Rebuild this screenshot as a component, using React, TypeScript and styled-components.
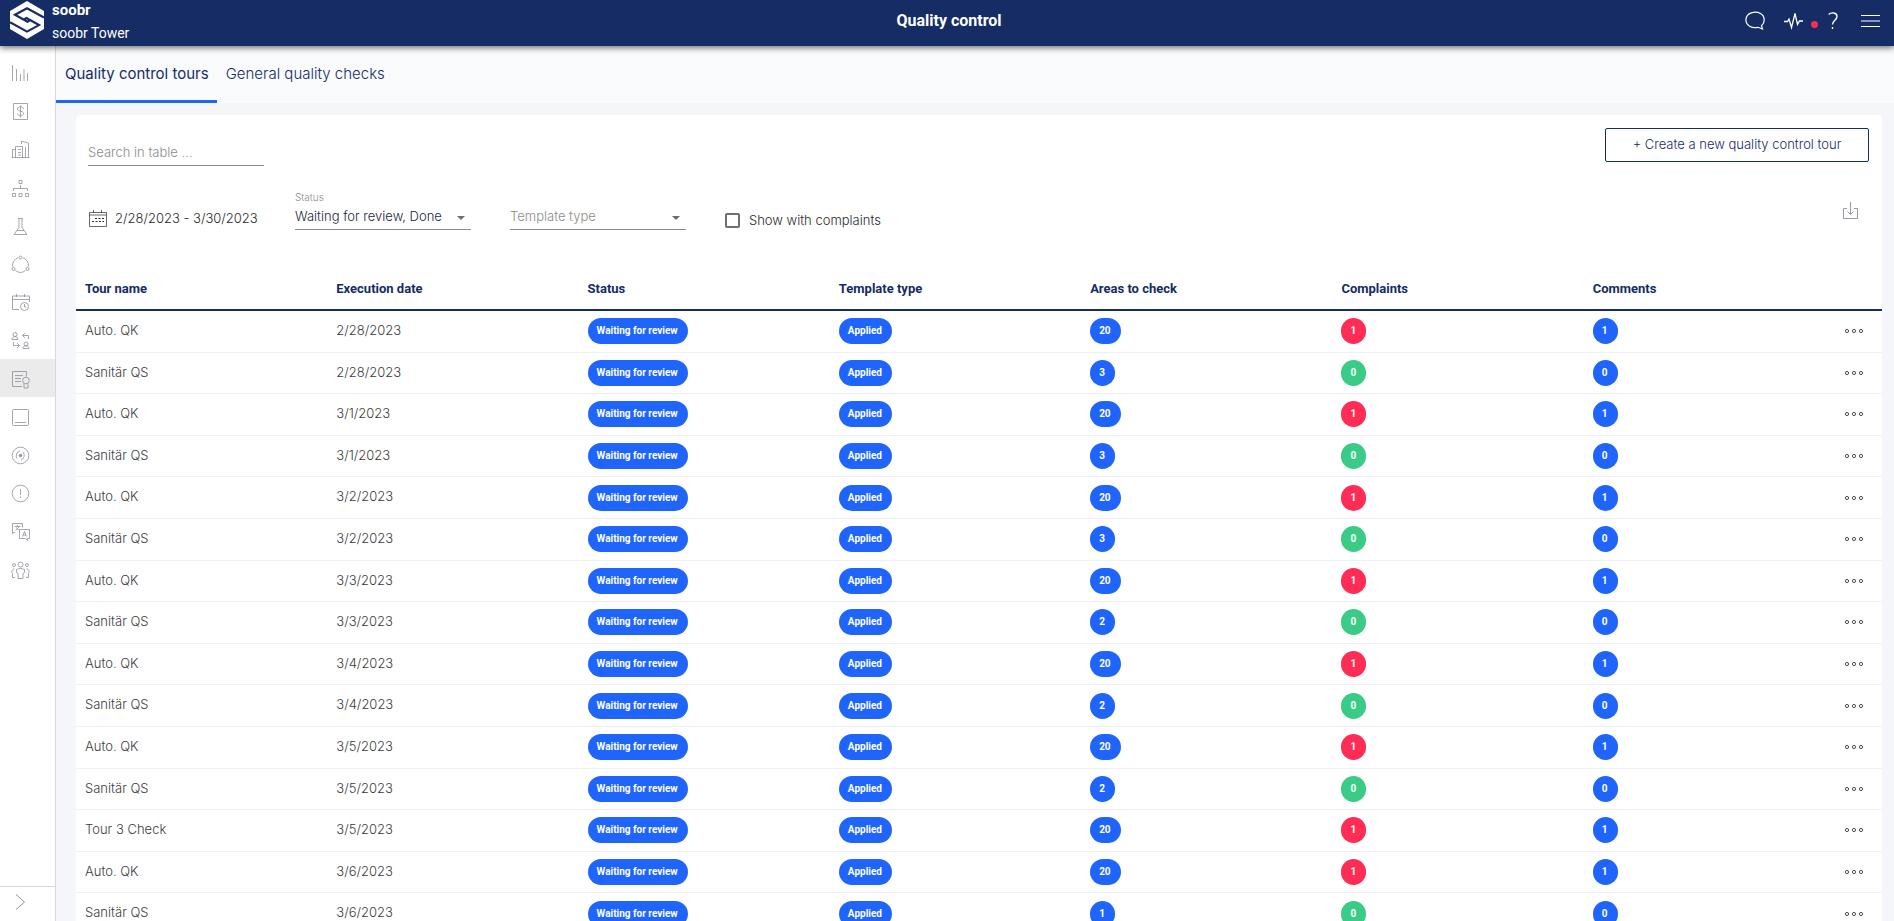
import React from "react";
import styled, { createGlobalStyle } from "styled-components";

const navy = "#152c64";
const blue = "#2065fb";

const GlobalStyle = createGlobalStyle`
  *, *::before, *::after { box-sizing: border-box; }
  html, body, #root { height: 100%; }
  body {
    margin: 0;
    overflow: hidden;
    background: #f5f6f9;
    color: #3c3c3c;
    font-family: Inter, "Noto Sans", sans-serif;
    font-size: 13px;
    font-weight: 300;
  }
  button, input, select { font: inherit; color: inherit; }
  svg { display: block; fill: none; stroke: currentColor; }
`;

const Page = styled.div`
  display: flex;
  flex-direction: column;
  height: 100vh;
`;

const Header = styled.header`
  display: grid;
  grid-template-columns: 1fr auto 1fr;
  flex: none;
  height: 46px;
  padding: 0 6px 0 10px;
  background: ${navy};
  color: #fff;
  font-family: Roboto, sans-serif;
  box-shadow: 0 2px 6px rgba(0, 0, 0, 0.55);
  z-index: 2;
`;

const Brand = styled.div`
  display: flex;
  align-items: flex-start;
  gap: 8px;
`;

const BrandText = styled.div`
  display: flex;
  flex-direction: column;
  gap: 7px;
  padding-top: 2px;
  font-size: 14px;
  font-weight: 400;
  line-height: 16px;
`;

const BrandName = styled.span`
  font-size: 15px;
  font-weight: 700;
`;

const Title = styled.h1`
  margin: 0;
  padding-top: 11px;
  font-size: 16px;
  font-weight: 700;
  line-height: 20px;
`;

const Tools = styled.div`
  display: flex;
  justify-content: flex-end;
  align-items: center;
  padding: 0 8px 4px 0;
`;

const IconButton = styled.button<{ $gap?: number }>`
  display: flex;
  align-items: center;
  margin: 0 0 0 ${(p) => p.$gap ?? 0}px;
  padding: 0;
  border: 0;
  background: none;
  cursor: pointer;
`;

const Dot = styled.span`
  width: 7px;
  height: 7px;
  margin: 6px 0 0 8px;
  border-radius: 50%;
  background: #ff2b54;
`;

const Body = styled.div`
  display: flex;
  flex: 1;
  min-height: 0;
`;

const Sidebar = styled.nav`
  display: flex;
  flex-direction: column;
  flex: none;
  width: 56px;
  padding-top: 7px;
  border-right: 1px solid #d9d9d9;
  background: #fff;
  color: #8f9199;
`;

const NavLink = styled.a<{ $active?: boolean }>`
  display: flex;
  align-items: center;
  box-sizing: content-box;
  height: 1.2em;
  padding: 11px 0 8px 11px;
  background: ${(p) => (p.$active ? "#ebebeb" : "transparent")};
  color: inherit;
  font-size: 16px;
`;

const Expand = styled.button`
  display: flex;
  align-items: center;
  height: 35px;
  margin-top: auto;
  padding: 0 0 4px 15px;
  border: 0;
  border-top: 1px solid #d9d9d9;
  background: none;
`;

const Main = styled.main`
  flex: 1;
  min-width: 0;
  overflow: hidden;
`;

const Tabs = styled.div`
  display: flex;
  height: 57px;
  background: #fafbfd;
`;

const Tab = styled.button<{ $active?: boolean }>`
  padding: 0 8px 0 9px;
  border: 0;
  border-bottom: 3px solid ${(p) => (p.$active ? blue : "transparent")};
  background: none;
  color: ${navy};
  font-size: 15px;
  font-weight: ${(p) => (p.$active ? 400 : 300)};
`;

const Card = styled.section`
  margin: 12px 12px 0 20px;
  border-radius: 4px 4px 0 0;
  background: #fff;
`;

const TopRow = styled.div`
  display: flex;
  justify-content: space-between;
  align-items: flex-start;
  height: 51px;
  padding: 13px 13px 0 12px;
`;

const Search = styled.input`
  width: 176px;
  height: 38px;
  padding: 10px 0 0;
  border: 0;
  border-bottom: 1px solid #8c8c8c;
  background: none;
  outline: none;
  &::placeholder { color: #8b8b8b; opacity: 1; }
`;

const CreateButton = styled.button`
  width: 264px;
  height: 34px;
  padding: 0 0 2px;
  border: 1px solid ${navy};
  border-radius: 2px;
  background: #fff;
  color: ${navy};
  white-space: pre;
`;

const Filters = styled.div`
  display: flex;
  align-items: flex-end;
  height: 64px;
  padding: 0 24px 0 13px;
`;

const DateRange = styled.button`
  display: flex;
  align-items: center;
  gap: 8px;
  width: 206px;
  height: 24px;
  padding: 0;
  border: 0;
  background: none;
  color: #2a2a2a;
`;

const Field = styled.label`
  display: flex;
  flex-direction: column;
  position: relative;
  width: 176px;
  margin-right: 39px;
`;

const FieldLabel = styled.span`
  color: #8b8b8b;
  font-size: 10px;
  line-height: 12px;
`;

const Select = styled.select<{ $empty?: boolean }>`
  width: 100%;
  height: 27px;
  padding: 0;
  border: 0;
  border-bottom: 1px solid #8c8c8c;
  border-radius: 0;
  appearance: none;
  background: none;
  color: ${(p) => (p.$empty ? "#8b8b8b" : "#1c2540")};
`;

const Caret = styled.span`
  position: absolute;
  right: 6px;
  bottom: 10px;
  border: 4px solid transparent;
  border-top-color: #6d6d6d;
  border-bottom: 0;
  pointer-events: none;
`;

const Check = styled.label`
  display: flex;
  align-items: center;
  gap: 9px;
  height: 20px;
  color: #2a2a2a;
`;

const Checkbox = styled.input`
  width: 15px;
  height: 15px;
  margin: 0;
  border: 2px solid #6f6f6f;
  border-radius: 2px;
  appearance: none;
`;

const Download = styled(IconButton)`
  margin-left: auto;
  margin-bottom: 11px;
  color: #8f9199;
`;

const Table = styled.table`
  width: 100%;
  margin-top: 37px;
  border-spacing: 0;
  table-layout: fixed;
`;

const Th = styled.th<{ $menu?: boolean }>`
  width: ${(p) => (p.$menu ? "47px" : "auto")};
  height: 44px;
  padding: 0 0 0 9px;
  border-bottom: 2px solid ${navy};
  color: ${navy};
  font-family: Roboto, sans-serif;
  font-weight: 700;
  text-align: left;
`;

const Td = styled.td`
  padding: 0 0 0 9px;
  border-bottom: 1px solid #f0f1f4;
`;

const TextTd = styled(Td)`
  padding: 12px 0 13px 9px;
  line-height: 1.2;
`;

const Badge = styled.span<{ $color?: string }>`
  display: block;
  width: fit-content;
  min-width: 25px;
  height: 26px;
  padding: 0 10px 0 9px;
  border-radius: 13px;
  background: ${(p) => p.$color ?? blue};
  color: #fff;
  font-family: Roboto, sans-serif;
  font-size: 10px;
  font-weight: 700;
  line-height: 25px;
  white-space: nowrap;
`;

const navIcons: { name: string; art: React.ReactNode }[] = [
  { name: "Statistics", art: <path d="M1.5 1v16M5.5 5v12M9.500 10v7M13 5v12M16.500 9v8" /> },
  { name: "Billing", art: <><path d="M2.500 1.500h14v16h-14zM9.500 3.500v12M12.500 7c0-3-6-3-6 0s6 1.500 6 4.500-6 3-6 0" /></> },
  { name: "Buildings", art: <path d="M.5 17.500h18M1.500 17.500v-8h3M4.500 17.500v-11h7v11M10.500 4v-3l7 2v14.500M14.500 7v10M7 9.500h3M7 12.500h3M7 15h3" /> },
  { name: "Structure", art: <path d="M8 1.500h3v3h-3zM9.500 6v3.500M2.500 12v-2.500h14v2.500M1.500 14.500h3v3h-3zM8 14.500h3v3h-3zM14.500 14.500h3v3h-3z" /> },
  { name: "Laboratory", art: <path d="M7 1.500h5M8 1.500v9l-5 7h13l-5-7v-9M6 13.500h7" /> },
  { name: "Cycle", art: <><circle cx="9.500" cy="2.500" r="1.500" /><circle cx="2.500" cy="14" r="1.500" /><circle cx="16.500" cy="14" r="1.500" /><path d="M7 2.800a8 8 0 0 0-5.300 9M12 2.800a8 8 0 0 1 5.300 9M4.500 15.500a8 8 0 0 0 10 0" /></> },
  { name: "Planning", art: <><path d="M8 16.500h-6.500v-13.500h17v6M1.500 6.500h17M5.500 1v3M13.500 1v3" /><circle cx="13.500" cy="13.500" r="4" /><path d="M13.500 11v3h2" /></> },
  { name: "Substitutes", art: <><circle cx="4" cy="3.500" r="2" /><path d="M1 8.500c0-4 6-4 6 0zM17.500 8v-3.500h-6M14 2l-2.500 2.500 2.500 2.500M2.500 11v3.500h6M6 12l2.500 2.500-2.500 2.500" /><circle cx="15" cy="13" r="2" /><path d="M12 17.500c0-4 6-4 6 0z" /></> },
  { name: "Quality control", art: <><path d="M11 16.500h-9.500v-15h14v5M4 5.500h8M4 8.500h6M4 11.500h6" /><circle cx="15" cy="10.500" r="3.300" /><path d="M13 13.500v4.500h4v-4.500" /></> },
  { name: "Tablet", art: <path d="M2.500 1.500h14a1 1 0 0 1 1 1v14a1 1 0 0 1-1 1h-14a1 1 0 0 1-1-1v-14a1 1 0 0 1 1-1zM4 14.500h11" /> },
  { name: "Target", art: <><circle cx="9.500" cy="9.500" r="8.300" /><path d="M6 12.500a5 5 0 0 1 3-7.500M12 6a5 5 0 0 1-2 8" /><circle cx="9.500" cy="9.500" r="1.300" fill="currentColor" /></> },
  { name: "Alerts", art: <><circle cx="9.500" cy="9.500" r="8.300" /><path d="M9.500 5v6M9.500 12.500v1.500" /></> },
  { name: "Translations", art: <path d="M4 10.500h-1.500l-1 1.500v-10.500h10v4M3.500 4.500h6M6.500 3v1.500M8.500 4.500l-4 4M5 5.500l3.500 3M8.500 7.500h10v9h-2v2l-2-2h-6zM11.500 14.500l2-5 2 5M12 13h3" /> },
  { name: "Team", art: <><circle cx="3" cy="4" r="1.500" /><circle cx="9.500" cy="3.500" r="2.500" /><circle cx="16" cy="4" r="1.500" /><path d="M7 17.500v-5l-1.500-1v-3q4-2.500 8 0v3l-1.500 1v5zM3.500 8c-3 0-3 3-2 4.500v4h2.500M15.500 8c3 0 3 3 2 4.500v4h-2.500" /></> },
];

type Row = [name: string, date: string, areas: number, complaints: number, comments: number];

const rows: Row[] = [
  ["Auto. QK", "2/28/2023", 20, 1, 1],
  ["Sanitär QS", "2/28/2023", 3, 0, 0],
  ["Auto. QK", "3/1/2023", 20, 1, 1],
  ["Sanitär QS", "3/1/2023", 3, 0, 0],
  ["Auto. QK", "3/2/2023", 20, 1, 1],
  ["Sanitär QS", "3/2/2023", 3, 0, 0],
  ["Auto. QK", "3/3/2023", 20, 1, 1],
  ["Sanitär QS", "3/3/2023", 2, 0, 0],
  ["Auto. QK", "3/4/2023", 20, 1, 1],
  ["Sanitär QS", "3/4/2023", 2, 0, 0],
  ["Auto. QK", "3/5/2023", 20, 1, 1],
  ["Sanitär QS", "3/5/2023", 2, 0, 0],
  ["Tour 3 Check", "3/5/2023", 20, 1, 1],
  ["Auto. QK", "3/6/2023", 20, 1, 1],
  ["Sanitär QS", "3/6/2023", 1, 0, 0],
];

const columns = ["Tour name", "Execution date", "Status", "Template type", "Areas to check", "Complaints", "Comments"];

const Logo = () => (
  <svg width="34" height="40" viewBox="0 0 34 40" aria-label="soobr logo">
    <path d="M17 1l17 10v18l-17 10-17-10v-18z" fill="#fff" stroke="none" />
    <path d="M34 17.500L17 8.200 5 14.700l12.500 7 3-1.700M0 22.300l17 9.300 12-6.500-12.500-7-3 1.700" stroke={navy} strokeWidth="2.200" />
  </svg>
);

export default function App() {
  return (
    <Page>
      <GlobalStyle />
      <Header>
        <Brand>
          <Logo />
          <BrandText>
            <BrandName>soobr</BrandName>
            <span>soobr Tower</span>
          </BrandText>
        </Brand>
        <Title>Quality control</Title>
        <Tools>
          <IconButton aria-label="Chat">
            <svg width="20" height="20" viewBox="0 0 20 20" strokeWidth="1.200">
              <path d="M16.500 14.700C20.500 11.500 20 5 15.500 2.500 10-.2 1.500 1.500.9 8.500.7 14.500 7 17.800 13 16.300L17.500 18z" />
            </svg>
          </IconButton>
          <IconButton $gap={19} aria-label="Activity">
            <svg width="19" height="18" viewBox="0 0 19 18" strokeWidth="1.300">
              <path d="M0 9.500h3.500l1.500-2.500 2.500 8.500L11 1.500l2.500 11 2-3.500h3.500" />
            </svg>
          </IconButton>
          <Dot />
          <IconButton $gap={10} aria-label="Help">
            <svg width="10" height="18" viewBox="0 0 10 18" strokeWidth="1.400">
              <path d="M.7 2.500C3 0 9 .2 9 4.500c0 3.500-4.500 4-4.500 8M4.500 15v2" />
            </svg>
          </IconButton>
          <IconButton $gap={23} aria-label="Menu">
            <svg width="19" height="14" viewBox="0 0 19 14">
              <path d="M0 1.500h19M0 7h19M0 12.500h19" />
            </svg>
          </IconButton>
        </Tools>
      </Header>
      <Body>
        <Sidebar>
          {navIcons.map(({ name, art }) => (
            <NavLink key={name} href="#" aria-label={name} $active={name === "Quality control"}>
              <svg width="19" height="19" viewBox="0 0 19 19" strokeWidth="0.800">{art}</svg>
            </NavLink>
          ))}
          <Expand aria-label="Expand navigation">
            <svg width="11" height="16" viewBox="0 0 11 16"><path d="M1 .5l8.500 7.500L1 15.500" /></svg>
          </Expand>
        </Sidebar>
        <Main>
          <Tabs>
            <Tab $active>Quality control tours</Tab>
            <Tab>General quality checks</Tab>
          </Tabs>
          <Card>
            <TopRow>
              <Search placeholder="Search in table ..." aria-label="Search in table" />
              <CreateButton>+ Create a new quality control tour</CreateButton>
            </TopRow>
            <Filters>
              <DateRange>
                <svg width="18" height="17" viewBox="0 0 18 17">
                  <path d="M.5 2.500h17v14h-17zM.5 5h17M4.500 0v3M12.500 0v3" strokeWidth="0.700" />
                  <path d="M6 8.500h9M3 11.500h12" strokeDasharray="2 1.500" />
                </svg>
                2/28/2023 - 3/30/2023
              </DateRange>
              <Field>
                <FieldLabel>Status</FieldLabel>
                <Select defaultValue="wd">
                  <option value="wd">Waiting for review, Done</option>
                </Select>
                <Caret />
              </Field>
              <Field>
                <Select $empty aria-label="Template type" defaultValue="">
                  <option value="">Template type</option>
                </Select>
                <Caret />
              </Field>
              <Check>
                <Checkbox type="checkbox" />
                Show with complaints
              </Check>
              <Download aria-label="Download">
                <svg width="15" height="17" viewBox="0 0 15 17" strokeWidth="0.900">
                  <path d="M4 6.500h-3.500v10h14v-10h-3.500M7.500 0v12.500M4.500 9.500l3 3 3-3" />
                </svg>
              </Download>
            </Filters>
            <Table>
              <thead>
                <tr>
                  {columns.map((c) => <Th key={c}>{c}</Th>)}
                  <Th $menu aria-label="Actions" />
                </tr>
              </thead>
              <tbody>
                {rows.map(([name, date, areas, complaints, comments], i) => (
                  <tr key={i}>
                    <TextTd>{name}</TextTd>
                    <TextTd>{date}</TextTd>
                    <Td><Badge>Waiting for review</Badge></Td>
                    <Td><Badge>Applied</Badge></Td>
                    <Td><Badge>{areas}</Badge></Td>
                    <Td><Badge $color={complaints ? "#ff2c55" : "#3acb87"}>{complaints}</Badge></Td>
                    <Td><Badge>{comments}</Badge></Td>
                    <Td>
                      <IconButton aria-label="Row actions">
                        <svg width="20" height="6" viewBox="0 0 20 6" stroke="#a3a3a3" strokeWidth="0.900">
                          <circle cx="3" cy="3" r="1.600" />
                          <circle cx="10" cy="3" r="1.600" />
                          <circle cx="17" cy="3" r="1.600" />
                        </svg>
                      </IconButton>
                    </Td>
                  </tr>
                ))}
              </tbody>
            </Table>
          </Card>
        </Main>
      </Body>
    </Page>
  );
}
